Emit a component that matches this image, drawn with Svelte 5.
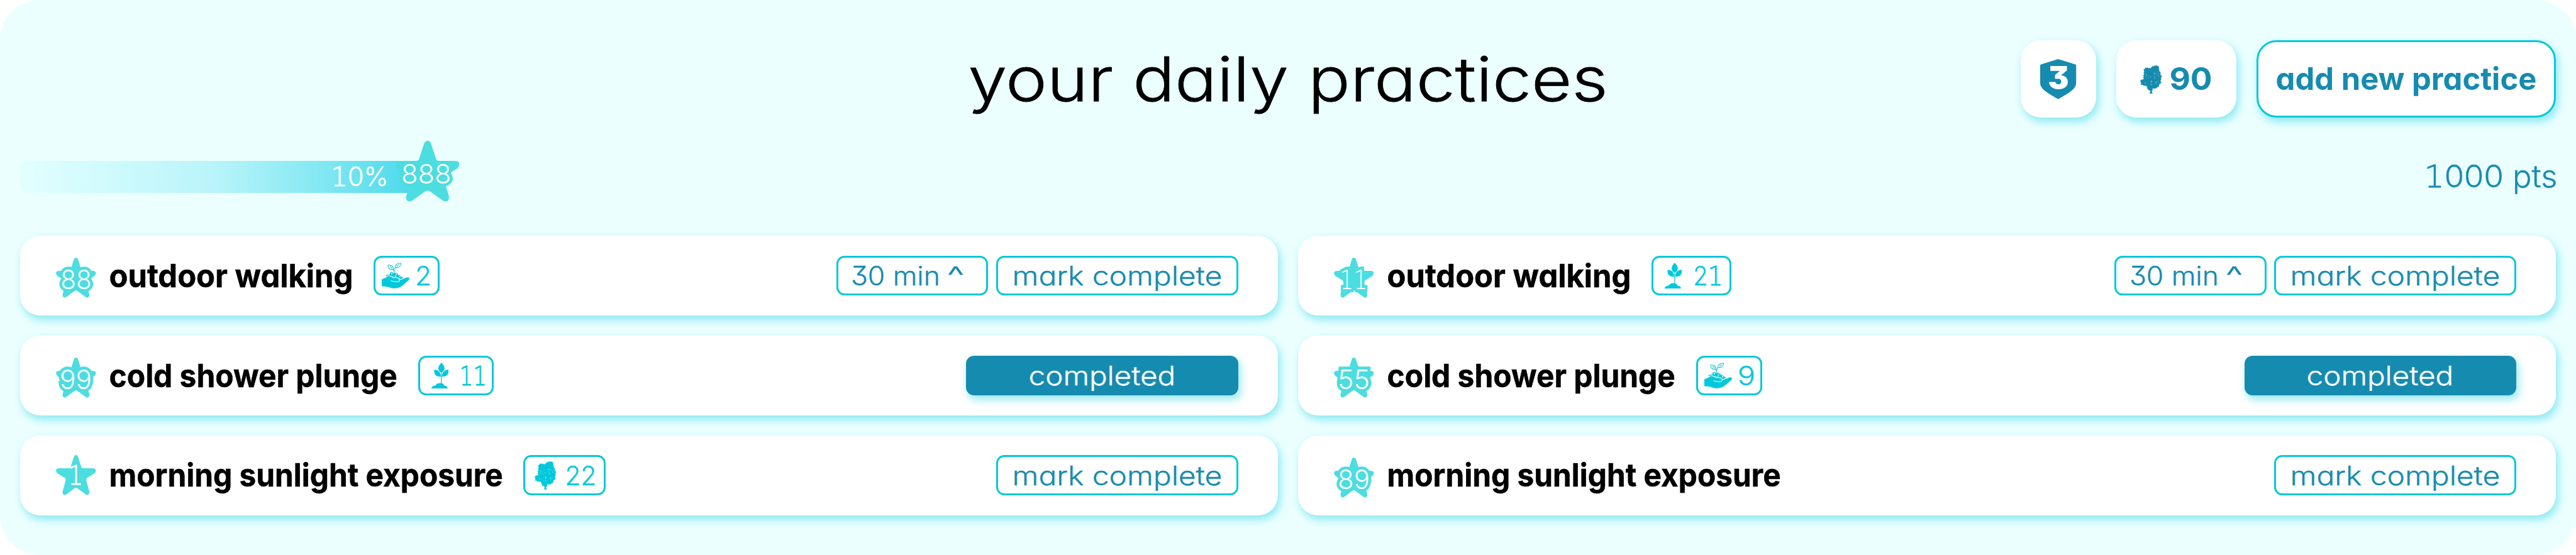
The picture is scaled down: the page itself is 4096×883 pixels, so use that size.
<script>
  const STAR =
    'M50 0Q54 0 55.5 5L63 29Q64 33 67.500 33L92 33Q100 33 99.8 39Q99.500 43 96 46L78 57Q75 60 76 64L83.500 92Q84 97 81 99Q77 101 73.500 98L54 83.500Q50 80.500 46 83.500L26.500 98Q23 101 19 99Q16 97 16.500 92L24 64Q25 60 22 57L4 46Q.5 43 .2 39Q0 33 8 33L32.500 33Q36 33 37 29L44.500 5Q46 0 50 0Z';

  const rows = [
    { pts: '88', pw: 13.8, name: 'outdoor walking', w: 120.5, icon: 'hand', n: '2', nw: 6.3, bw: 33, time: true },
    { pts: '11', pw: 12.2, name: 'outdoor walking', w: 120.5, icon: 'plant', n: '21', nw: 13.2, bw: 40, time: true },
    { pts: '99', pw: 14.2, name: 'cold shower plunge', w: 142.7, icon: 'plant', n: '11', nw: 12.1, bw: 38, done: true },
    { pts: '55', pw: 14.2, name: 'cold shower plunge', w: 142.7, icon: 'hand', n: '9', nw: 6.8, bw: 33, done: true },
    { pts: '1', pw: 5.9, name: 'morning sunlight exposure', w: 195.5, icon: 'tree', n: '22', nw: 14, bw: 41 },
    { pts: '89', pw: 14.2, name: 'morning sunlight exposure', w: 195.5 }
  ];

  // Widens or narrows a text run to a set ink width, given in design units (rem).
  function stretch(node, width) {
    const unit = parseFloat(getComputedStyle(document.documentElement).fontSize);
    const size = parseFloat(getComputedStyle(node).fontSize);
    const natural = node.getBoundingClientRect().width;
    const bearing = size * (natural > size * 4 ? 0.05 : 0.07);
    const k = (width * unit) / (natural - 2 * bearing);
    node.style.width = width + 'rem';
    node.style.transform = `translateX(${-bearing * k}px) scaleX(${k})`;
  }

  // Foliage: a hand-placed outline, roughened with seeded noise.
  let seed = 11;
  const rnd = () => ((seed = (seed * 16807) % 2147483647) / 2147483647);
  const crown = [
    [186, 224], [176, 222], [168, 212], [171, 201], [152, 198], [138, 191], [129, 184], [128, 168], [136, 160], [145, 153], [144, 138],
    [148, 122], [147, 104], [153, 90], [160, 86], [172, 91], [184, 88], [192, 91], [195, 79], [206, 75], [222, 74], [236, 79],
    [240, 95], [242, 108], [249, 122], [254, 145], [251, 162], [252, 178], [245, 190], [235, 202], [222, 211], [212, 213], [204, 212], [200, 223]
  ];
  const pts = [];
  for (let i = 0; i < crown.length - 1; i++) {
    const [ax, ay] = crown[i];
    const [bx, by] = crown[i + 1];
    for (let k = 0; k < 5; k++) {
      const t = k / 5;
      pts.push([ax + (bx - ax) * t + (rnd() - 0.5) * 9, ay + (by - ay) * t + (rnd() - 0.5) * 9]);
    }
  }
  const TREE =
    'M' + pts.map((p) => p[0].toFixed(1) + ' ' + p[1].toFixed(1)).join('L') +
    'L200 223L196 227L197 236L202 243L181 243L186 236L185 225Z';
  const light = [];
  for (let i = 0; i < 34; i++) light.push([152 + rnd() * 88, 118 + rnd() * 80, 1 + rnd() * 3, 1 + rnd() * 3]);
</script>

{#snippet num(text)}{#each text as c}{#if c === '1'}<em>1</em>{:else}{c}{/if}{/each}{/snippet}

{#snippet tree()}
  <svg class="tree" viewBox="126 70 130 173">
    <path d={TREE} fill="currentColor" />
    {#each light as [x, y, w, h]}
      <rect {x} {y} width={w} height={h} fill="#fff" />
    {/each}
  </svg>
{/snippet}

{#snippet plant()}
  <svg class="plant" viewBox="0 0 35 52">
    <g fill="currentColor">
      <path d="M20 0Q26.500 6 26.400 12Q25 18 20 20Q15 18 13.800 12Q14 6 20 0Z" />
      <path d="M5.700 14Q13 14 16.500 19Q19 23 19 28Q11 28.500 7.500 24Q5 20 5.700 14Z" />
      <path d="M34.300 14Q27 14 23.500 19Q21 23 21 28Q29 28.500 32.500 24Q35 20 34.300 14Z" />
      <path d="M19.200 20H20.800V43H19.200Z" />
      <path d="M0 51.700Q0 47.500 6 46.500Q9 45.500 11 42.500Q16 40 22 41.500Q25 43 26 46Q32 46.500 33 51.700Z" />
    </g>
  </svg>
{/snippet}

{#snippet hand()}
  <svg class="hand" viewBox="101 88 166 156">
    <g fill="currentColor">
      <path d="M123 169Q127 158 139 160L149 161Q147 147 159 145Q168 144 172 151Q184 146 190 151L198 154Q202 159 199 164Q210 159 217 168L222 174Q232 176 234 183L212 190L150 172Z" />
      <path d="M101 187Q118 183 130 174Q142 167 156 173Q170 181 186 182Q202 184 206 193L243 181Q259 171 266 180Q270 187 258 197Q236 220 212 234Q188 246 160 240Q130 228 101 230Z" />
    </g>
    <path d="M121 174Q138 162 156 169Q172 177 188 177Q206 180 211 189L238 180" fill="none" stroke="#fff" stroke-width="4" />
    <path d="M157 197Q180 205 202 201Q210 197 208 190" fill="none" stroke="#fff" stroke-width="4" stroke-linecap="round" />
    <g fill="#fff">
      <circle cx="161" cy="154" r="4" /><circle cx="189" cy="158" r="3.500" /><circle cx="183" cy="168" r="3.500" /><circle cx="211" cy="172" r="4" />
    </g>
    <g fill="none" stroke="currentColor" stroke-width="4" stroke-linejoin="round" stroke-linecap="round">
      <path d="M176 152V128Q178 118 188 116" />
      <path d="M175 138Q173 129 165 126" />
      <path d="M138 103Q158 100 168 113Q172 120 170 128Q155 131 145 122Q139 115 138 103Z" />
      <path d="M217 92Q198 90 187 100Q180 109 183 117Q198 120 209 111Q216 104 217 92Z" />
      <path d="M152 111L162 120M204 100L193 109" />
    </g>
  </svg>
{/snippet}

<main>
  <header>
    <h1><span use:stretch={316.6}>your daily practices</span></h1>
    <div class="actions">
      <div class="tile level">
        <div class="shield">
          <svg viewBox="0 0 18 20"><path d="M8.700 .1Q9 0 9.300 .1L17.600 2.700Q18 2.900 18 3.300V12.200Q18 14.300 14.600 16.700Q12.500 18.100 9.300 19.900Q9 20 8.700 19.900Q5.500 18.100 3.400 16.700Q0 14.300 0 12.200V3.300Q0 2.900 .4 2.700Z" fill="currentColor" /></svg>
          <b>3</b>
        </div>
      </div>
      <div class="tile trees">
        {@render tree()}
        <span use:stretch={19.2}>90</span>
      </div>
      <button class="tile add"><span use:stretch={129}>add new practice</span></button>
    </div>
  </header>

  <section class="progress">
    <div class="bar"><span use:stretch={27}>{@render num('10%')}</span></div>
    <div class="marker">
      <svg viewBox="0 0 100 100" preserveAspectRatio="none"><path d={STAR} fill="currentColor" /></svg>
      <span class="ringed" use:stretch={23.1}>888</span>
    </div>
    <span class="goal" use:stretch={65.1}>{@render num('1000 pts')}</span>
  </section>

  <section class="list">
    {#each rows as r}
      <article>
        <div class="star" class:single={r.pts.length === 1}>
          <svg viewBox="0 0 100 100"><path d={STAR} fill="currentColor" /></svg>
          <span class:ringed={r.pts.length > 1} use:stretch={r.pw}>{@render num(r.pts)}</span>
        </div>
        <h2><span use:stretch={r.w}>{r.name}</span></h2>
        {#if r.icon}
          <div class="badge" style:width="{r.bw}rem">
            <i>
              {#if r.icon === 'hand'}{@render hand()}{:else if r.icon === 'plant'}{@render plant()}{:else}{@render tree()}{/if}
            </i>
            <span use:stretch={r.nw}>{@render num(r.n)}</span>
          </div>
        {/if}
        <div class="buttons">
          {#if r.done}
            <button class="done"><span use:stretch={72}>completed</span></button>
          {:else}
            {#if r.time}
              <button class="time"><span use:stretch={42.7}>30 min</span><span use:stretch={6.1}>^</span></button>
            {/if}
            <button class="mark"><span use:stretch={103.5}>mark complete</span></button>
          {/if}
        </div>
      </article>
    {/each}
  </section>
</main>

<style>
  :global(html) { font-size: 3.17766px; background: #fff; }
  :global(body) { margin: 0; overflow: hidden; }
  * { box-sizing: border-box; }
  main {
    width: 1289rem;
    height: 883px;
    padding: 20rem 10rem;
    border-radius: 20rem;
    background: #ebffff;
    overflow: hidden;
    font: 300 13.4rem/20rem Inter, 'Open Sans', sans-serif;
    font-feature-settings: 'cv11', 'cv09';
    color: #168bb0;
  }
  span { display: inline-block; flex: none; white-space: pre; text-align: left; transform-origin: 0 50%; }
  em { font-family: 'DejaVu Sans', sans-serif; font-weight: 200; font-style: normal; line-height: 1; -webkit-text-stroke: .3rem currentColor; }
  svg { display: block; overflow: visible; }
  header {
    display: grid;
    grid-template-columns: 1fr auto 1fr;
    align-items: center;
    height: 39rem;
  }
  h1 {
    grid-column: 2;
    margin: 0;
    font-size: 30.8rem;
    line-height: 39rem;
    font-weight: 300;
    color: #000;
    -webkit-text-stroke: .25rem #000;
  }
  .actions { display: flex; justify-content: flex-end; gap: 10rem; }
  .tile {
    display: flex;
    align-items: center;
    justify-content: center;
    height: 39rem;
    padding: 0;
    border: 0;
    border-radius: 10rem;
    background: #fff;
    box-shadow: 1rem 2rem 4rem rgba(3, 200, 219, .4);
    font: inherit;
    font-feature-settings: inherit;
    font-size: 15.6rem;
    font-weight: 700;
    color: #168bb0;
  }
  .level { width: 38rem; }
  .shield { position: relative; width: 18rem; height: 20rem; }
  .shield svg { width: 18rem; height: 20rem; }
  .shield b {
    position: absolute;
    inset: -.7rem 0 auto;
    text-align: center;
    line-height: 20rem;
    color: #fff;
  }
  .trees { width: 60rem; justify-content: flex-start; padding-left: 12rem; gap: 5rem; }
  .tree { width: 10.8rem; height: 14.4rem; }
  .add { width: 150rem; border: 1rem solid #03c8db; }

  .progress {
    position: relative;
    display: flex;
    align-items: center;
    justify-content: space-between;
    height: 16rem;
    margin: 21.5rem 0;
  }
  .bar {
    display: flex;
    justify-content: flex-end;
    align-items: center;
    width: 202rem;
    height: 16rem;
    padding-right: 18.6rem;
    border-radius: 4rem;
    background: linear-gradient(90deg, #e2ffff, #b9f4fa 48%, #84e8f2 74%, #46d8ea);
    color: #fff;
  }
  .marker {
    position: absolute;
    left: 188rem;
    top: -10.1rem;
    width: 32rem;
    height: 30.4rem;
    color: #4bdde0;
  }
  .marker svg { width: 100%; height: 100%; }
  .marker span { position: absolute; left: 3.7rem; top: 6.6rem; }
  .goal { font-size: 15.5rem; }
  .ringed, .ringed em {
    -webkit-text-stroke: 3rem #4bdde0;
    paint-order: stroke fill;
  }
  .marker span, .star span { color: #fff; }

  .list { display: grid; grid-template-columns: 1fr 1fr; gap: 10rem; }
  article {
    display: flex;
    align-items: center;
    height: 40rem;
    padding: 0 20rem 0 18rem;
    border-radius: 10rem;
    background: #fff;
    box-shadow: 1rem 2rem 4rem rgba(3, 200, 219, .4);
  }
  .star {
    display: grid;
    place-items: center;
    width: 20rem;
    height: 20rem;
    color: #4bdde0;
  }
  .star > * { grid-area: 1 / 1; }
  .star svg { width: 20rem; height: 20rem; }
  .star span { padding-top: 2rem; z-index: 1; }
  .star.single span { padding-top: 0; }
  h2 {
    margin: 0 0 0 7.3rem;
    font-size: 16rem;
    line-height: 20rem;
    font-weight: 700;
    color: #000;
    white-space: nowrap;
    -webkit-text-stroke: .15rem #000;
  }
  .badge {
    display: flex;
    align-items: center;
    height: 20rem;
    margin-left: 11.2rem;
    padding-left: 3rem;
    border: 1rem solid #03c8db;
    border-radius: 4rem;
    color: #03c8db;
    line-height: 18rem;
  }
  .badge i { display: grid; place-items: center; width: 14rem; margin-right: 3.7rem; }
  .hand { width: 13.83rem; height: 13rem; }
  .plant { width: 8.7rem; height: 13rem; }
  .buttons { display: flex; gap: 4rem; margin-left: auto; }
  button { cursor: pointer; }
  .buttons button {
    display: flex;
    align-items: center;
    justify-content: center;
    height: 20rem;
    padding: 0;
    border: 1rem solid #03c8db;
    border-radius: 4rem;
    background: #fff;
    font: inherit;
    line-height: 18rem;
    font-feature-settings: inherit;
    color: #168bb0;
  }
  .buttons .time { width: 76rem; justify-content: flex-start; padding-left: 7.4rem; gap: 5.8rem; }
  .buttons .mark { width: 121rem; }
  .buttons .done {
    width: 136rem;
    border: 0;
    background: #168bb0;
    color: #fff;
    box-shadow: 1rem 2rem 4rem rgba(3, 200, 219, .4);
  }
  .buttons span, .badge span, .goal, .bar span { -webkit-text-stroke: .12rem currentColor; }
</style>
